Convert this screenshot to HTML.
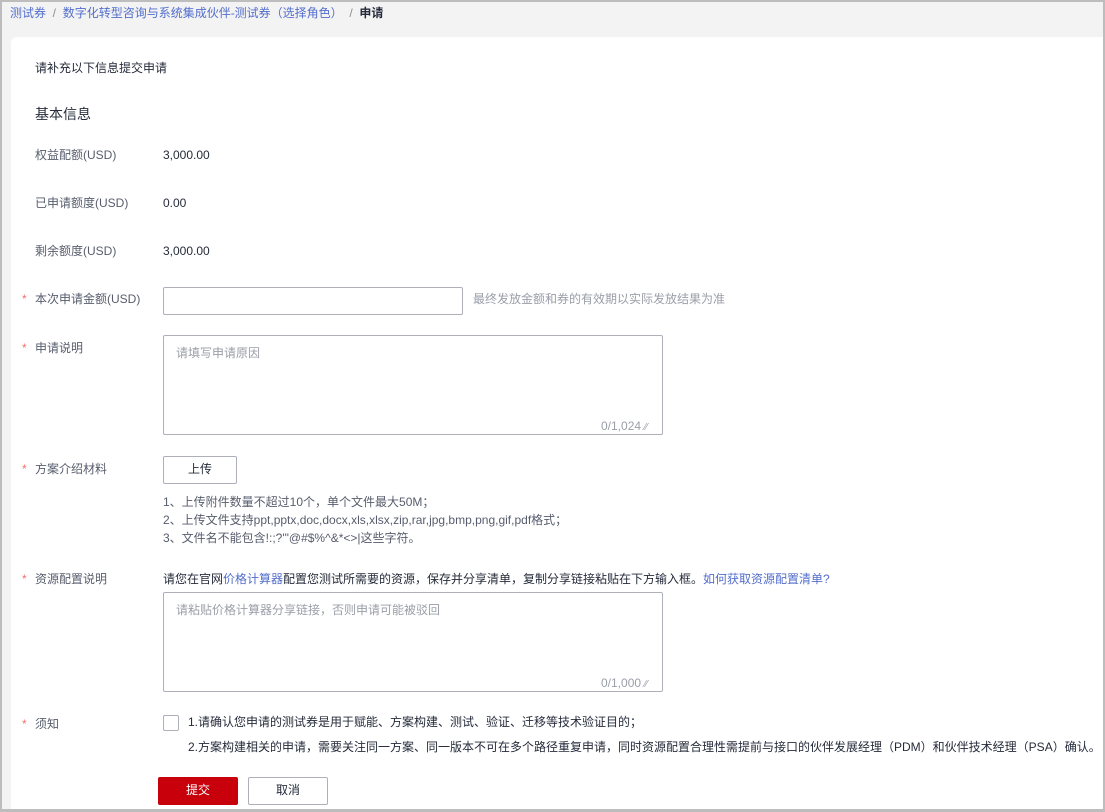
<!DOCTYPE html>
<html><head><meta charset="utf-8"><style>
*{margin:0;padding:0;box-sizing:border-box}
html,body{width:1105px;height:812px;overflow:hidden}
body{background:#f3f3f3;font-family:"Liberation Sans","Noto Sans CJK SC",sans-serif;font-size:12px;color:#252b3a;position:relative}
.frame{position:absolute;left:0;top:0;width:1105px;height:812px;border:2px solid #bdbdbd;border-bottom-width:3px;z-index:10}
.a{position:absolute;white-space:nowrap;line-height:16px}
.card{position:absolute;left:11px;top:37px;width:1094px;height:780px;background:#fff;border-radius:6px 0 0 0}
.lbl{color:#575d6c}
.st{color:#f66f6a}
.box{position:absolute;border:1px solid #adb0b8;border-radius:2px;background:#fff}
.ph{color:#9a9ea8}
.lk{color:#526ecc}
.btn{position:absolute;border:1px solid #adb0b8;border-radius:2px;text-align:center;line-height:25px;font-size:12px;background:#fff}
</style></head><body>
<div class="frame"></div>
<div class="a" style="left:10px;top:5px"><span class="lk">测试券</span><span style="color:#8a8e99"> &nbsp;/ &nbsp;</span><span class="lk">数字化转型咨询与系统集成伙伴-测试券（选择角色）</span><span style="color:#8a8e99"> &nbsp;/ &nbsp;</span><b style="color:#252b3a">申请</b></div>
<div class="card"></div>
<div class="a" style="left:35px;top:60px">请补充以下信息提交申请</div>
<div class="a" style="left:35px;top:105px;font-size:14px;line-height:18px">基本信息</div>
<div class="a lbl" style="left:35px;top:147px">权益配额(USD)</div><div class="a" style="left:163px;top:147px">3,000.00</div>
<div class="a lbl" style="left:35px;top:195px">已申请额度(USD)</div><div class="a" style="left:163px;top:195px">0.00</div>
<div class="a lbl" style="left:35px;top:243px">剩余额度(USD)</div><div class="a" style="left:163px;top:243px">3,000.00</div>

<div class="a st" style="left:22px;top:291px">*</div><div class="a lbl" style="left:35px;top:291px">本次申请金额(USD)</div>
<div class="box" style="left:163px;top:287px;width:300px;height:28px"></div>
<div class="a ph" style="left:473px;top:291px">最终发放金额和券的有效期以实际发放结果为准</div>

<div class="a st" style="left:22px;top:340px">*</div><div class="a lbl" style="left:35px;top:340px">申请说明</div>
<div class="box" style="left:163px;top:335px;width:500px;height:100px"></div>
<div class="a ph" style="left:176px;top:345px">请填写申请原因</div>
<div class="a ph" style="left:601px;top:418px">0/1,024 <span style="font-size:10px">⁄⁄</span></div>

<div class="a st" style="left:22px;top:461px">*</div><div class="a lbl" style="left:35px;top:461px">方案介绍材料</div>
<div class="btn" style="left:163px;top:456px;width:74px;height:28px">上传</div>
<div class="a lbl" style="left:163px;top:494px">1、上传附件数量不超过10个，单个文件最大50M；</div>
<div class="a lbl" style="left:163px;top:512px">2、上传文件支持ppt,pptx,doc,docx,xls,xlsx,zip,rar,jpg,bmp,png,gif,pdf格式；</div>
<div class="a lbl" style="left:163px;top:530px">3、文件名不能包含!:;?'"@#$%^&amp;*&lt;&gt;|这些字符。</div>

<div class="a st" style="left:22px;top:571px">*</div><div class="a lbl" style="left:35px;top:571px">资源配置说明</div>
<div class="a" style="left:163px;top:571px">请您在官网<span class="lk">价格计算器</span>配置您测试所需要的资源，保存并分享清单，复制分享链接粘贴在下方输入框。<span class="lk">如何获取资源配置清单?</span></div>
<div class="box" style="left:163px;top:592px;width:500px;height:100px"></div>
<div class="a ph" style="left:176px;top:602px">请粘贴价格计算器分享链接，否则申请可能被驳回</div>
<div class="a ph" style="left:601px;top:675px">0/1,000 <span style="font-size:10px">⁄⁄</span></div>

<div class="a st" style="left:22px;top:716px">*</div><div class="a lbl" style="left:35px;top:716px">须知</div>
<div class="box" style="left:163px;top:715px;width:16px;height:16px"></div>
<div class="a" style="left:188px;top:714px">1.请确认您申请的测试券是用于赋能、方案构建、测试、验证、迁移等技术验证目的；</div>
<div class="a" style="left:188px;top:739px">2.方案构建相关的申请，需要关注同一方案、同一版本不可在多个路径重复申请，同时资源配置合理性需提前与接口的伙伴发展经理（PDM）和伙伴技术经理（PSA）确认。</div>

<div class="btn" style="left:158px;top:777px;width:80px;height:28px;background:#c7000b;border-color:#c7000b;color:#fff">提交</div>
<div class="btn" style="left:248px;top:777px;width:80px;height:28px">取消</div>
</body></html>
